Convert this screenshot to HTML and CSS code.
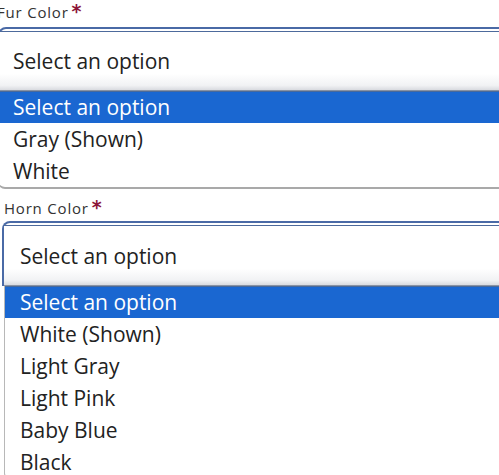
FILE: index.html
```html
<!DOCTYPE html>
<html>
<head>
<meta charset="utf-8">
<link rel="stylesheet" href="styles.css">
</head>
<body>
<div class="page">
  <div class="field field-fur">
    <div class="label">Fur Color<span class="req">*</span></div>
    <div class="select">
      <div class="select-inner"><span>Select an option</span></div>
    </div>
    <ul class="list">
      <li class="sel">Select an option</li>
      <li>Gray (Shown)</li>
      <li>White</li>
    </ul>
  </div>
  <div class="field field-horn">
    <div class="label">Horn Color<span class="req">*</span></div>
    <div class="select">
      <div class="select-inner"><span>Select an option</span></div>
    </div>
    <ul class="list">
      <li class="sel">Select an option</li>
      <li>White (Shown)</li>
      <li>Light Gray</li>
      <li>Light Pink</li>
      <li>Baby Blue</li>
      <li>Black</li>
    </ul>
  </div>
</div>
</body>
</html>
```
FILE: styles.css
```css
html, body {
  margin: 0;
  padding: 0;
  background: #fff;
  overflow: hidden;
}
body {
  width: 499px;
  height: 475px;
  font-family: "Open Sans", "Liberation Sans", sans-serif;
  color: #222;
}
.page {
  display: flex;
  flex-direction: column;
}
.field {
  display: flex;
  flex-direction: column;
  width: 540px;
}
.field-fur {
  margin-left: -2px;
}
.field-horn {
  margin-left: 2px;
  margin-top: 6px;
}
.label {
  font-size: 15px;
  letter-spacing: 0.8px;
  color: #333;
  height: 26px;
  line-height: 24px;
}
.field-fur .label {
  margin-left: -1px;
  height: 27px;
  line-height: 23px;
}
.field-horn .label {
  margin-left: 2px;
}
.req {
  color: #8c1538;
  font-family: "DejaVu Sans", sans-serif;
  font-weight: bold;
  font-size: 19px;
  margin-left: 3px;
  letter-spacing: 0;
}
.select {
  border: 2px solid #4a6aa6;
  border-bottom: none;
  border-radius: 8px 8px 0 0;
  background: #fff;
}
.select-inner {
  margin-top: 2px;
  border-top: 1px solid #4d6a9c;
  height: 58px;
  display: flex;
  align-items: center;
  padding-left: 13px;
  font-size: 21px;
  background: linear-gradient(#fff 0, #fff 72%, #f1f2f4 92%, #d9dbe0 100%);
  border-bottom: 1px solid #8a93a3;
}
.field-horn .select-inner {
  padding-left: 16px;
  height: 59px;
}
.list {
  list-style: none;
  margin: 0;
  padding: 0;
  font-size: 21px;
  background: #fff;
  border-left: 1px solid #b8b8b8;
  border-bottom: 2px solid #a9a9a9;
  border-radius: 0 0 0 7px;
}
.list li {
  height: 32px;
  line-height: 32px;
  padding-left: 14px;
}
.list li.sel {
  background: #1a67d1;
  color: #fff;
  border-top: 1px solid #4a6a9a;
  height: 31px;
  line-height: 31px;
}
.field-horn .list {
  margin-left: 2px;
}
.field-horn .list li {
  padding-left: 15px;
}
```
